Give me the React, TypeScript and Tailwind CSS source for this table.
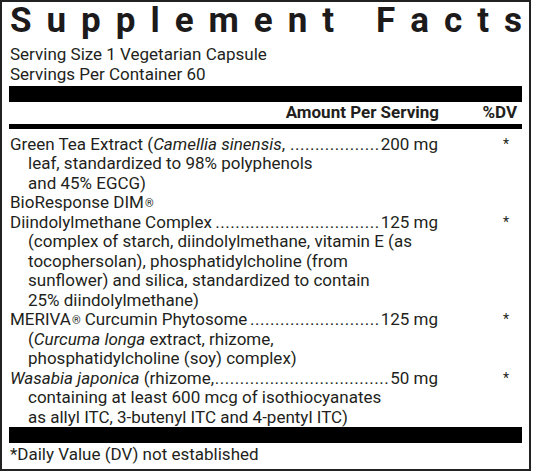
import React from "react";

const NB = "\u00a0";

function Line({ children, amount, dots }: { children: React.ReactNode; amount: string; dots: number }) {
  return (
    <div className="flex items-baseline whitespace-nowrap">
      <span className="shrink-0">{children}</span>
      <span className="flex-1 min-w-0 flex justify-end">
        <span className="tracking-[0.5px]">{".".repeat(dots)}</span>
      </span>
      <span className="shrink-0 pl-[1px]">{amount}</span>
    </div>
  );
}

function Row({
  first,
  rest,
  amount,
  dots = 0,
}: {
  first: React.ReactNode;
  rest: React.ReactNode[];
  amount?: string;
  dots?: number;
}) {
  return (
    <div className="flex">
      <div className="w-[429px] pl-[1px]">
        {amount ? (
          <Line amount={amount} dots={dots}>
            {first}
          </Line>
        ) : (
          <div className="whitespace-nowrap">{first}</div>
        )}
        {rest.map((r, i) => (
          <div key={i} className="pl-[18px] whitespace-nowrap">
            {r}
          </div>
        ))}
      </div>
      <div className="flex-1 flex justify-end pr-[13px] text-[14px]">{amount ? "*" : ""}</div>
    </div>
  );
}

const R = () => <sup className="text-[11px] leading-none relative top-[-1px] ml-[1px]">®</sup>;

export default function App() {
  const title = "Supplement Facts".split("");
  return (
    <div className="bg-white w-[533px] h-[473px]">
      <div
        className="w-[531px] h-[471px] border-2 border-[#222] px-[7px] text-[#231f20] text-[17px] leading-[19.5px] flex flex-col"
        style={{ fontFamily: "Roboto, 'Liberation Sans', sans-serif" }}
      >
        <div className="flex justify-between pl-[1px] text-[35px] font-bold leading-[38px] h-[42px] text-[#1c1a1b]">
          {title.map((c, i) => (
            <span key={i} className={c === " " ? "w-[12px]" : ""}>
              {c === " " ? "" : c}
            </span>
          ))}
        </div>
        <div className="pl-[1px] leading-[20px]">Serving Size 1 Vegetarian Capsule</div>
        <div className="pl-[1px] leading-[20px]">Servings Per Container 60</div>
        <div className="h-[16px] bg-black mt-[2px] shrink-0" />
        <div className="flex font-bold h-[22px] items-center shrink-0">
          <div className="w-[430px] text-right">Amount Per Serving</div>
          <div className="flex-1 text-right pr-[5px]">%DV</div>
        </div>
        <div className="h-[5px] bg-black shrink-0" />
        <div className="pt-[5.5px] h-[298px] shrink-0">
          <Row
            amount="200 mg"
            dots={18}
            first={
              <>
                Green Tea Extract (<i>Camellia sinensis</i>,{NB}
              </>
            }
            rest={["leaf, standardized to 98% polyphenols", "and 45% EGCG)"]}
          />
          <Row
            first={
              <>
                BioResponse DIM
                <R />
              </>
            }
            rest={[]}
          />
          <Row
            amount="125 mg"
            dots={33}
            first={<>Diindolylmethane Complex{NB}</>}
            rest={[
              "(complex of starch, diindolylmethane, vitamin E (as",
              "tocophersolan), phosphatidylcholine (from",
              "sunflower) and silica, standardized to contain",
              "25% diindolylmethane)",
            ]}
          />
          <Row
            amount="125 mg"
            dots={26}
            first={
              <>
                MERIVA
                <R /> Curcumin Phytosome{NB}
              </>
            }
            rest={[
              <>
                (<i>Curcuma longa</i> extract, rhizome,
              </>,
              "phosphatidylcholine (soy) complex)",
            ]}
          />
          <Row
            amount="50 mg"
            dots={35}
            first={
              <>
                <i>Wasabia japonica</i> (rhizome,
              </>
            }
            rest={["containing at least 600 mcg of isothiocyanates", "as allyl ITC, 3-butenyl ITC and 4-pentyl ITC)"]}
          />
        </div>
        <div className="h-[16px] bg-black shrink-0" />
        <div className="pl-[1px] pt-[2px]">*Daily Value (DV) not established</div>
      </div>
    </div>
  );
}
